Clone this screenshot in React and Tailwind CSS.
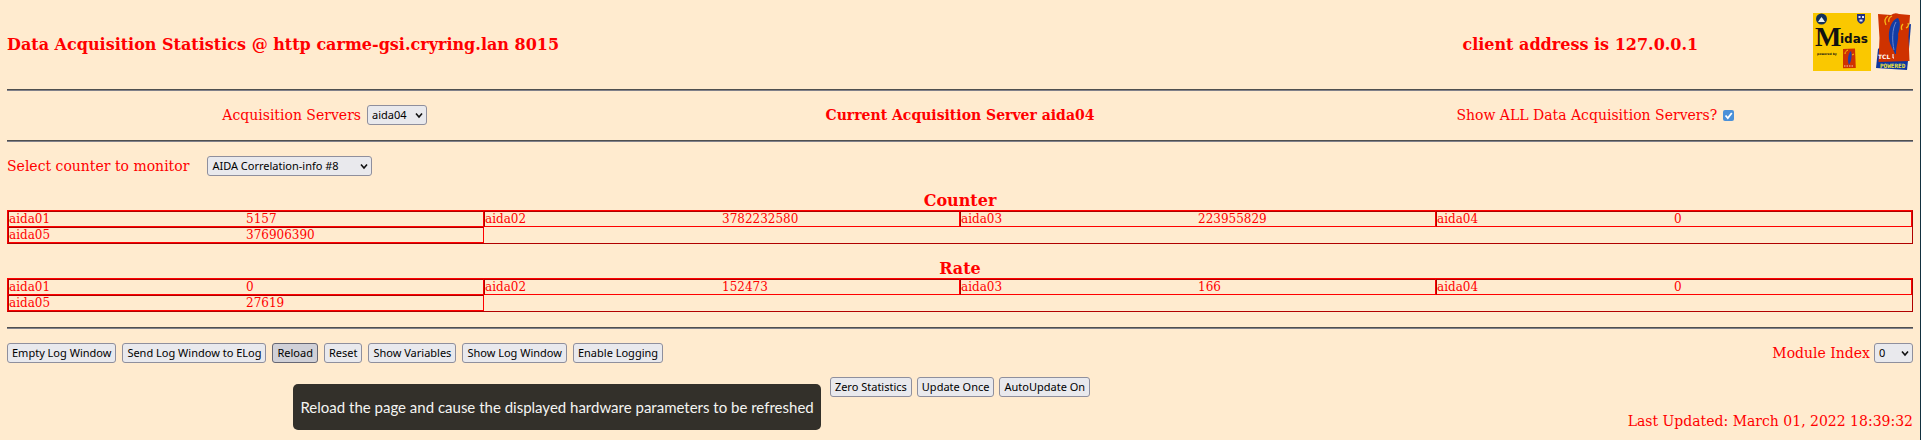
import { useState } from "react";

const counters = [
  { name: "aida01", value: "5157" },
  { name: "aida02", value: "3782232580" },
  { name: "aida03", value: "223955829" },
  { name: "aida04", value: "0" },
  { name: "aida05", value: "376906390" },
];

const rates = [
  { name: "aida01", value: "0" },
  { name: "aida02", value: "152473" },
  { name: "aida03", value: "166" },
  { name: "aida04", value: "0" },
  { name: "aida05", value: "27619" },
];

const Rule = () => <hr className="h-[2px] border-0 border-t border-t-[#4f4f4f] bg-[#80808a]" />;

const Button = ({ children, active, ...rest }) => (
  <button
    type="button"
    className={`h-5 rounded-[3px] border px-1 font-['Noto_Sans',sans-serif] text-[11px] leading-4 whitespace-nowrap text-black ${
      active ? "border-[#676774] bg-[#d0d0d7]" : "border-[#8f8f9d] bg-[#e9e9ed]"
    }`}
    {...rest}
  >
    {children}
  </button>
);

const Select = ({ id, options, width }) => {
  const [value, setValue] = useState(options[0]);

  return (
    <span className={`relative inline-flex ${width}`}>
      <select
        id={id}
        value={value}
        onChange={(e) => setValue(e.target.value)}
        className="h-5 w-full appearance-none rounded-[3px] border border-[#8f8f9d] bg-[#e9e9ed] pl-1 font-['Noto_Sans',sans-serif] text-[11px] leading-4 text-black"
      >
        {options.map((option) => (
          <option key={option}>{option}</option>
        ))}
      </select>
      <svg className="pointer-events-none absolute top-1.5 right-1 h-2 w-2" viewBox="0 0 8 8" fill="none" stroke="#111" strokeWidth="1.6">
        <path d="M1 2.5l3 3.5 3-3.5" />
      </svg>
    </span>
  );
};

const StatTable = ({ title, items }) => {
  const rows = [];
  for (let i = 0; i < items.length; i += 4) {
    rows.push(items.slice(i, i + 4));
  }

  return (
    <table className="w-full table-fixed border-separate border-spacing-0 border border-t-[#ff0000] border-r-[#b00000] border-b-[#b00000] border-l-[#ff0000] text-[12px] leading-[14px]">
      <caption className="pt-1 text-center text-[16px] leading-[18px] font-bold">{title}</caption>
      <tbody>
        {rows.map((row) => (
          <tr key={row[0].name}>
            {row.map((item) => (
              <td
                key={item.name}
                className="w-1/4 border border-t-[#b00000] border-r-[#ff0000] border-b-[#ff0000] border-l-[#b00000] p-0"
              >
                <div className="grid grid-cols-2">
                  <span>{item.name}</span>
                  <span>{item.value}</span>
                </div>
              </td>
            ))}
          </tr>
        ))}
      </tbody>
    </table>
  );
};

const MidasLogo = () => (
  <svg className="h-[58px] w-[58px]" viewBox="0 0 58 58">
    <rect width="58" height="58" fill="#fac800" />
    <circle cx="8.5" cy="6" r="5.5" fill="#12305a" />
    <path d="M5 9l2-3 1.5-2L10 6l2 3z" fill="#e8f0f0" />
    <path d="M44 1h8v5q0 3-4 5-4-2-4-5z" fill="#203080" />
    <path d="M45.5 3h2v2h-2zM49 3h2v2h-2zM46.5 6.5h3v2h-3z" fill="#dfe5f5" />
    <text x="2" y="33" fontFamily="Liberation Serif" fontWeight="bold" fontSize="28" fill="#111">M</text>
    <text x="27" y="30" fontFamily="DejaVu Sans" fontWeight="bold" fontSize="12" fill="#111">idas</text>
    <text x="4" y="42" fontFamily="DejaVu Sans" fontWeight="bold" fontSize="3" fill="#111">powered by</text>
    <path d="M30 36l12-.5.8 19.5-12.8.3z" fill="#cf3200" />
    <path d="M36 52c-2-4-1-12 2-14 1 3 1 9-2 14z" fill="#2440a8" />
    <path d="M32 41c0-2 1-3 3-4M39 42l2-1" stroke="#fac800" fill="none" />
    <path d="M31 53h10" stroke="#f5c8b0" strokeDasharray="1.5 1" />
  </svg>
);

const TclLogo = () => (
  <svg className="h-[58px] w-[37px]" viewBox="0 0 37 58">
    <path d="M32 12l4-1-3 37-1 9-31-2 2-19z" fill="#0c35a0" />
    <path d="M3 1l13 1q4-3 8-1l11 1-1.5 22 1 24-31 1 1-24z" fill="#cf3200" />
    <path d="M20 41c-1-4-5-8-6-15-1-9 2-19 9-21 3 4 2 11 0 16 1 5-2 12-2 20z" fill="#123ca5" />
    <path d="M21 9c-4 7-4 19-2 28" stroke="#6f86cc" fill="none" />
    <path d="M13 3c-3 2-4 5-2 9M17 3c-2 1-4 3-3 6M28 11c-2 2-2 4-1 6M33 10c1 2 0 4-2 5" stroke="#f5b818" strokeWidth="1.3" fill="none" />
    <text x="3" y="46" fontFamily="DejaVu Sans" fontSize="6" fontWeight="bold" fill="#fff">TCL</text>
    <path d="M18 41v4h1" stroke="#fff" fill="none" />
    <text x="5" y="55" fontFamily="DejaVu Sans Mono" fontSize="6" fontWeight="bold" fill="#f4e53a">POWERED</text>
  </svg>
);

const App = () => {
  const [showAll, setShowAll] = useState(true);

  return (
    <main className="min-h-screen border-r border-[#12303f] bg-[#ffebcf] px-[7px] font-['DejaVu_Serif',serif] text-[14px] leading-5 text-[#ff0000]">
      <header className="flex h-[89px] items-center gap-1">
        <h1 className="flex-1 text-[16px] font-bold">Data Acquisition Statistics @ http carme-gsi.cryring.lan 8015</h1>
        <h2 className="w-[24%] text-center text-[16px] font-bold">client address is 127.0.0.1</h2>
        <div className="flex gap-1 pr-px pb-1.5">
          <MidasLogo />
          <TclLogo />
        </div>
      </header>
      <Rule />

      <section className="grid grid-cols-3 items-center pt-3.5 pb-[15px]">
        <div className="flex items-center justify-center gap-1.5">
          <label htmlFor="server">Acquisition Servers</label>
          <Select id="server" width="w-[60px]" options={["aida04", "aida01", "aida02", "aida03", "aida05"]} />
        </div>
        <p className="text-center font-bold">Current Acquisition Server aida04</p>
        <div className="flex items-center justify-center gap-1.5">
          <label htmlFor="showAll">Show ALL Data Acquisition Servers?</label>
          <span className="relative inline-flex">
            <input
              id="showAll"
              type="checkbox"
              checked={showAll}
              onChange={() => setShowAll(!showAll)}
              className="h-[11px] w-[11px] appearance-none rounded-[2px] bg-white checked:bg-[#4a90d9]"
            />
            {showAll && (
              <svg className="pointer-events-none absolute inset-0 h-[11px] w-[11px]" viewBox="0 0 11 11" fill="none" stroke="#fff" strokeWidth="1.8">
                <path d="M2.5 5.5l2.3 2.5 4-5" />
              </svg>
            )}
          </span>
        </div>
      </section>
      <Rule />

      <section className="flex items-center gap-[18px] pt-3.5 pb-3">
        <label htmlFor="counter">Select counter to monitor</label>
        <Select id="counter" width="w-[165px]" options={["AIDA Correlation-info #8", "AIDA Good Events"]} />
      </section>

      <StatTable title="Counter" items={counters} />
      <div className="h-3" />
      <StatTable title="Rate" items={rates} />
      <div className="h-[15px]" />
      <Rule />

      <section className="flex items-center justify-between pt-3.5">
        <div className="flex gap-1.5">
          <Button>Empty Log Window</Button>
          <Button>Send Log Window to ELog</Button>
          <div className="relative flex">
            <Button active aria-describedby="reload-tip">Reload</Button>
            <div
              id="reload-tip"
              role="tooltip"
              className="absolute top-[41px] left-[21px] z-10 rounded-[5px] bg-[#33302a] px-[7px] py-3 font-['Lato',sans-serif] text-[15px] leading-[22px] whitespace-nowrap text-[#f4f4f2]"
            >
              Reload the page and cause the displayed hardware parameters to be refreshed
            </div>
          </div>
          <Button>Reset</Button>
          <Button>Show Variables</Button>
          <Button>Show Log Window</Button>
          <Button>Enable Logging</Button>
        </div>
        <div className="flex items-center gap-1">
          <label htmlFor="module">Module Index</label>
          <Select id="module" width="w-[39px]" options={["0", "1", "2", "3"]} />
        </div>
      </section>

      <section className="flex justify-center gap-[5px] pt-3.5">
        <Button>Zero Statistics</Button>
        <Button>Update Once</Button>
        <Button>AutoUpdate On</Button>
      </section>
      <p className="pt-3.5 text-right">Last Updated: March 01, 2022 18:39:32</p>
    </main>
  );
};

export default App;
